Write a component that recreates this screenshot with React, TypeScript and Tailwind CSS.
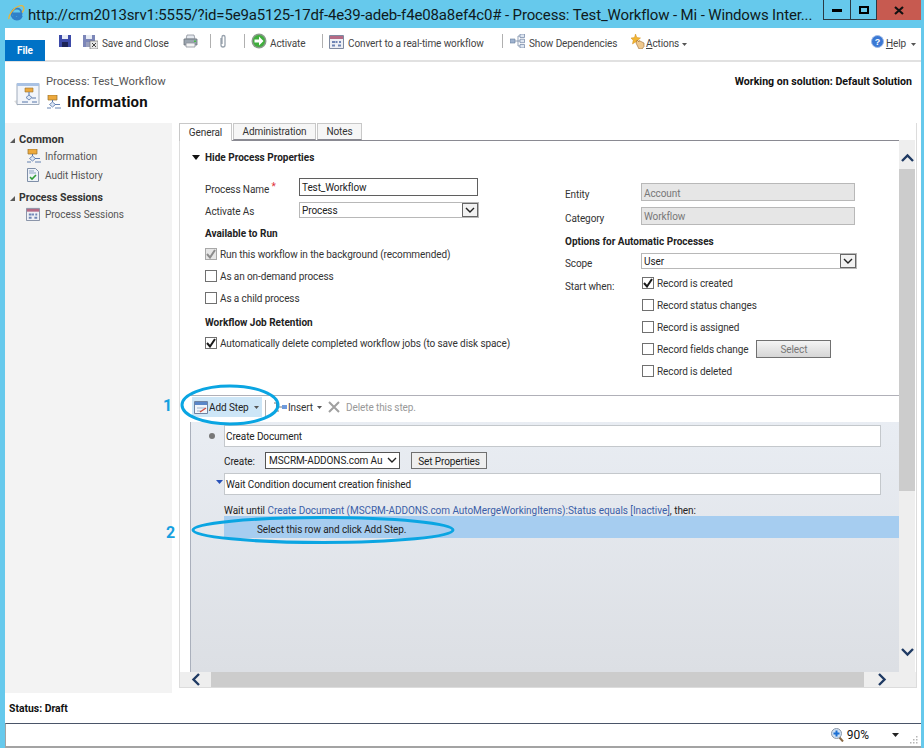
import React from "react";

const Sep = ({ ml }: { ml: string }) => <div className={`w-px h-[14px] bg-[#b0b0b0] ${ml}`} />;

const Caret = ({ color = "#555" }: { color?: string }) => (
  <svg width="5" height="3" viewBox="0 0 5 3" className="shrink-0"><path d="M0 0h5L2.500 3z" fill={color} /></svg>
);

const IeLogo = () => (
  <svg width="17" height="18" viewBox="0 0 17 18" className="shrink-0">
    <path d="M4 9.500h9.500c0-3-2-5-4.600-5C6 4.500 3.500 7 3.500 10s2.300 5.500 5.300 5.500c2.200 0 3.700-1 4.500-2.700h-3c-.4.600-1 .9-1.700.9-1.400 0-2.500-1-2.600-2.400H14" fill="none" stroke="#2f7fc8" strokeWidth="2" />
    <path d="M1 15C0 11 6 3.500 11 2c3-1 5 0 5 2.500-.3 2-1.500 3.500-2 4" fill="none" stroke="#e9b53b" strokeWidth="1.300" />
  </svg>
);

const Floppy = ({ x }: { x?: boolean }) => (
  <svg width="15" height="15" viewBox="0 0 15 15" className="shrink-0">
    <path d="M0 1h12v12H0z" fill={x ? "#7c86b8" : "#3c4aa8"} />
    <path d="M3 1h6v4H3z" fill="#e8ecf5" />
    <path d="M3 8h6v5H3z" fill={x ? "#9aa0bd" : "#1d2456"} />
    {x && <path d="M7 7h8v8H7z" fill="#e6e6e6" stroke="#777" strokeWidth="0.700" />}
    {x && <path d="M9 9l4 4m0-4l-4 4" stroke="#444" strokeWidth="1" />}
  </svg>
);

const Printer = () => (
  <svg width="15" height="14" viewBox="0 0 15 14" className="shrink-0">
    <path d="M4 1h7l1 4H3z" fill="#e4e8ee" stroke="#8a9099" strokeWidth="0.800" />
    <path d="M1 5h13v6H1z" fill="#9aa4ae" stroke="#6c747c" strokeWidth="0.800" />
    <path d="M3 9h9v4H3z" fill="#f4f4f4" stroke="#8a9099" strokeWidth="0.800" />
    <rect x="11" y="6.500" width="2" height="1.500" fill="#49c04a" />
  </svg>
);

const Clip = () => (
  <svg width="8" height="14" viewBox="0 0 8 14" className="shrink-0">
    <path d="M2 4v7a2 2 0 0 0 4 0V3a1.400 1.400 0 0 0-3 0v7" fill="none" stroke="#98a2ad" strokeWidth="1.300" />
  </svg>
);

const Activate = () => (
  <svg width="16" height="16" viewBox="0 0 16 16" className="shrink-0">
    <circle cx="8" cy="8" r="7.500" fill="#8a9a8a" />
    <circle cx="8" cy="8" r="6" fill="#3fae3c" />
    <path d="M3.500 6.500H8V3.500L12.500 8 8 12.500v-3H3.500z" fill="#fff" />
  </svg>
);

const Calendar = ({ size = 15 }: { size?: number }) => (
  <svg width={size} height={size} viewBox="0 0 15 15" className="shrink-0">
    <path d="M.5 1.500h14v13H.5z" fill="#eef0f5" stroke="#7f8aa0" />
    <path d="M1 2h13v3H1z" fill="#b56a85" />
    <path d="M3 7h3v2H3zm3.500 0h2v2h-2zM10 7h2v2h-2zM3 10.500h3v2H3zm6 0h3v2H9z" fill="#6f85b5" />
  </svg>
);

const AddStepIcon = () => (
  <svg width="14" height="15" viewBox="0 0 14 15" className="shrink-0">
    <path d="M.5 1.500h13v12H.5z" fill="#f2f5fa" stroke="#6f83a3" />
    <path d="M1 2h12v3H1z" fill="#5a86c8" />
    <path d="M3 8h8M3 11h4" stroke="#9fb3cf" />
    <path d="M6 12l6-4" stroke="#d0493b" strokeWidth="1.400" />
  </svg>
);

const Deps = () => (
  <svg width="15" height="14" viewBox="0 0 15 14" className="shrink-0">
    <path d="M0 5h5v4H0z" fill="#9fb3cf" stroke="#667c9c" strokeWidth="0.600" />
    <path d="M5 7h3M8 2v10M8 2h2M8 7h2M8 12h2" stroke="#7a8ba5" strokeWidth="0.800" fill="none" />
    <path d="M10 0h4.500v3.500H10zM10 5.200h4.500v3.500H10zM10 10.500h4.500V14H10z" fill="#dde5f0" stroke="#6f83a3" strokeWidth="0.700" />
  </svg>
);

const Actions = () => (
  <svg width="15" height="15" viewBox="0 0 15 15" className="shrink-0">
    <path d="M4.500 0l1.300 3.500L9.500 4 6.800 6.300 7.500 10 4.500 8 1.500 10l.7-3.700L0 4l3.500-.4z" fill="#f2b632" stroke="#d28c1a" strokeWidth="0.500" />
    <path d="M6 6l2 2V6.500l5 2.500v3.500L11 15H8L5 9z" fill="#f0c98e" stroke="#9a6a30" strokeWidth="0.600" />
  </svg>
);

const Help = () => (
  <svg width="13" height="13" viewBox="0 0 13 13" className="shrink-0">
    <circle cx="6.500" cy="6.500" r="6" fill="#3a78d4" stroke="#9cb8e6" />
    <text x="6.500" y="10" fontSize="9" fontWeight="700" textAnchor="middle" fill="#fff" fontFamily="Liberation Sans, sans-serif">?</text>
  </svg>
);

const Flow = ({ size = 15 }: { size?: number }) => (
  <svg width={size} height={size} viewBox="0 0 15 15" className="shrink-0">
    <path d="M2 0h9v5H2z" fill="#eda93c" stroke="#96702f" strokeWidth="0.700" />
    <path d="M6.500 5v2" stroke="#5474a8" />
    <path d="M6.500 7l3 2.500-3 2.500-3-2.500z" fill="#dbe6f5" stroke="#5474a8" strokeWidth="0.800" />
    <path d="M1 13h4m4-3.500h5M9 13h6" stroke="#5474a8" strokeWidth="0.900" />
  </svg>
);

const BigFlow = () => (
  <svg width="27" height="26" viewBox="0 0 27 26" className="shrink-0">
    <path d="M0 19l4-1v6z" fill="#ddd" />
    <path d="M3 1.500h22v21H3z" fill="#f2f5fa" stroke="#a0acbc" />
    <path d="M3 1h22v3H3z" fill="#a9c2e4" />
    <path d="M11 6h8v4h-8z" fill="#eda93c" stroke="#96702f" strokeWidth="0.600" />
    <path d="M15 10v3" stroke="#5474a8" />
    <path d="M15 13l3 2.500-3 2.500-3-2.500z" fill="#dbe6f5" stroke="#5474a8" strokeWidth="0.800" />
    <path d="M8 20h6m4-4h4m-4 4h5" stroke="#5474a8" />
  </svg>
);

const Audit = () => (
  <svg width="12" height="14" viewBox="0 0 12 14" className="shrink-0">
    <path d="M.5.500h8l3 3v10H.5z" fill="#eef2f8" stroke="#7f8fa8" />
    <path d="M2 3h5M2 5h7" stroke="#8fa3c4" />
    <path d="M3 9l2 2 4-4" fill="none" stroke="#2f9e37" strokeWidth="1.600" />
  </svg>
);

const Tri = () => (
  <svg width="5" height="5" viewBox="0 0 5 5" className="shrink-0"><path d="M5 0v5H0z" fill="#595959" /></svg>
);

const Box = ({ checked, grey }: { checked?: boolean; grey?: boolean }) => (
  <span className={`w-[12px] h-[12px] shrink-0 border flex items-center justify-center ${grey ? "border-[#a8a8a8] bg-[#e6e6e6]" : "border-[#707070] bg-white"}`}>
    {checked && (
      <svg width="10" height="10" viewBox="0 0 10 10">
        <path d="M1 5l3 3.500L9 1" fill="none" stroke={grey ? "#8c8c8c" : "#1a1a1a"} strokeWidth="2" />
      </svg>
    )}
  </span>
);

const CheckRow = ({ label, checked, grey, children }: { label: string; checked?: boolean; grey?: boolean; children?: React.ReactNode }) => (
  <div className="h-[22px] flex items-center gap-[3px] whitespace-nowrap">
    <Box checked={checked} grey={grey} />
    <span>{label}</span>
    {children}
  </div>
);

const DropBtn = () => (
  <span className="w-[16px] h-full bg-[#f2f2f2] flex items-center justify-center shrink-0 border border-[#666]">
    <svg width="10" height="6" viewBox="0 0 10 6"><path d="M1 1l4 4 4-4" fill="none" stroke="#222" strokeWidth="1.400" /></svg>
  </span>
);

const Chevron = ({ d }: { d: "up" | "down" | "left" | "right" }) => {
  const paths = {
    up: "M1 8l5.500-5.500L12 8",
    down: "M1 2l5.500 5.500L12 2",
    left: "M8 1L2.500 6.500 8 12",
    right: "M2 1l5.500 5.500L2 12",
  };
  const vertical = d === "up" || d === "down";
  return (
    <svg width={vertical ? 13 : 10} height={vertical ? 10 : 13} viewBox={vertical ? "0 0 13 10" : "0 0 10 13"}>
      <path d={paths[d]} fill="none" stroke="#1f3a63" strokeWidth="2.400" />
    </svg>
  );
};

export default function App() {
  return (
    <div className="w-[924px] h-[748px] overflow-hidden bg-[#66c9ec] flex flex-col text-[10px] tracking-[-0.1px] text-[#333] font-['Roboto',sans-serif]">
      {/* Title bar */}
      <div className="h-[28px] flex items-start shrink-0">
        <div className="pl-[8px] pt-[4px] pr-[3px]"><IeLogo /></div>
        <div className="text-[15px] tracking-[-0.14px] text-[#0f1a20] leading-[30px] whitespace-nowrap w-[795px] shrink-0">
          http://crm2013srv1:5555/?id=5e9a5125-17df-4e39-adeb-f4e08a8ef4c0# - Process: Test_Workflow - Mi - Windows Inter...
        </div>
        <div className="flex h-[20px] w-[98px] shrink-0">
          <div className="w-[28px] border border-t-0 border-[#2a3a44] flex items-center justify-center"><div className="w-[10px] h-[3px] bg-black mt-[2px]" /></div>
          <div className="w-[26px] border-b border-r border-[#2a3a44] flex items-center justify-center"><div className="w-[10px] h-[8px] border-2 border-black" /></div>
          <div className="flex-1 bg-[#c75a50] flex items-center justify-center">
            <svg width="10" height="9" viewBox="0 0 10 9"><path d="M1 1l8 7M9 1L1 8" stroke="#111" strokeWidth="2.200" /></svg>
          </div>
        </div>
      </div>

      {/* White window */}
      <div className="ml-[5px] mr-[3px] flex-1 bg-white flex flex-col min-h-0">
        {/* Ribbon */}
        <div className="h-[34px] shrink-0 border-b-2 border-[#e1e1e1] flex text-[#444] whitespace-nowrap">
          <div className="w-[40px] h-[21px] self-end bg-[#0072c6] text-white font-bold text-[10px] flex items-center justify-center mb-[-1px]">File</div>
          <div className="flex-1 flex items-start pt-[6px] h-[26px]">
            <div className="ml-[14px] flex items-center h-[14px]"><Floppy /></div>
            <div className="ml-[9px] flex items-center h-[14px]"><Floppy x /></div>
            <span className="ml-[4px] leading-[20px] w-[66px]">Save and Close</span>
            <div className="ml-[15px] flex items-center h-[14px]"><Printer /></div>
            <Sep ml="ml-[12px]" />
            <div className="ml-[8px] flex items-center h-[14px]"><Clip /></div>
            <Sep ml="ml-[17px]" />
            <div className="ml-[6px] h-[14px] flex items-center"><Activate /></div>
            <span className="ml-[3px] leading-[20px] w-[40px]">Activate</span>
            <Sep ml="ml-[12px]" />
            <div className="ml-[6px] h-[14px] flex items-center"><Calendar /></div>
            <span className="ml-[4px] leading-[20px] w-[139px]">Convert to a real-time workflow</span>
            <Sep ml="ml-[15px]" />
            <div className="ml-[7px] h-[14px] flex items-center"><Deps /></div>
            <span className="ml-[4px] leading-[20px] w-[89px]">Show Dependencies</span>
            <div className="ml-[13px] h-[14px] flex items-center"><Actions /></div>
            <span className="leading-[20px] w-[33px]"><u>A</u>ctions</span>
            <span className="ml-[3px] h-[20px] flex items-center"><Caret /></span>
            <div className="ml-auto h-[14px] flex items-center"><Help /></div>
            <span className="ml-[2px] leading-[20px]"><u>H</u>elp</span>
            <span className="ml-[5px] mr-[5px] h-[20px] flex items-center"><Caret /></span>
          </div>
        </div>

        {/* Page header */}
        <div className="h-[61px] shrink-0 flex relative pt-[12px] pl-[9px]">
          <div className="mt-[8px]"><BigFlow /></div>
          <div className="ml-[5px] flex flex-col">
            <span className="text-[11.25px] text-[#555] leading-[16px] whitespace-nowrap tracking-[0]">Process: Test_Workflow</span>
            <div className="flex items-center mt-[3px]">
              <Flow />
              <span className="ml-[6px] text-[15px] font-bold text-[#111] leading-[18px] tracking-[0.15px]">Information</span>
            </div>
          </div>
          <div className="ml-auto mr-[9px] font-bold text-[10.6px] text-[#111] whitespace-nowrap leading-[16px] tracking-[0]">Working on solution: Default Solution</div>
        </div>

        {/* Body */}
        <div className="h-[570px] shrink-0 flex">
          {/* Nav */}
          <div className="w-[167px] shrink-0 bg-[#f3f3f3] text-[#555] text-[10px] tracking-[0] pt-[9px]">
            <div className="h-[16px] flex items-center pl-[5px] font-bold text-[#333] text-[11px]"><Tri /><span className="ml-[4px]">Common</span></div>
            <div className="h-[18px] -mt-[1px] flex items-center pl-[21px]"><Flow /><span className="ml-[4px]">Information</span></div>
            <div className="h-[18px] mt-[1px] flex items-center pl-[22px]"><Audit /><span className="ml-[6px]">Audit History</span></div>
            <div className="h-[16px] mt-[6px] flex items-center pl-[5px] font-bold text-[#333] text-[10.5px]"><Tri /><span className="ml-[4px]">Process Sessions</span></div>
            <div className="h-[18px] -mt-[1px] flex items-center pl-[21px]"><Calendar size={14} /><span className="ml-[5px]">Process Sessions</span></div>
          </div>

          {/* Main */}
          <div className="ml-[7px] w-[738px] h-[565px] flex flex-col shrink-0 border-r border-b border-[#dcdcdc]">
            {/* Tabs */}
            <div className="h-[18px] shrink-0 flex text-[#333] -mb-px relative z-10">
              <div className="w-[53px] h-[18px] border border-b-0 border-[#c8c8c8] bg-white flex items-center justify-center">General</div>
              <div className="ml-px w-[83px] h-[17px] border border-[#c8c8c8] border-b-[#8a8a92] bg-[#f6f6f6] flex items-center justify-center">Administration</div>
              <div className="ml-px w-[45px] h-[17px] border border-[#c8c8c8] border-b-[#8a8a92] bg-[#f6f6f6] flex items-center justify-center">Notes</div>
              <div className="flex-1" />
            </div>

            <div className="flex-1 flex flex-col border-l border-[#dcdcdc] min-h-0">
              <div className="flex-1 flex min-h-0">
                {/* Scrollable content */}
                <div className="w-[719px] flex flex-col border-t border-[#8a8a92]">
                  {/* Form */}
                  <div className="h-[254px] shrink-0 flex flex-col">
                    <div className="h-[32px] flex items-center pl-[12px] shrink-0">
                      <svg width="8" height="5" viewBox="0 0 8 5"><path d="M0 0h8L4 5z" fill="#111" /></svg>
                      <span className="ml-[5px] font-bold text-[10px] tracking-[0] text-[#222]">Hide Process Properties</span>
                    </div>
                    <div className="flex">
                      {/* Left column */}
                      <div className="w-[385px] pl-[25px] pt-[5px]">
                        <div className="flex h-[24px] items-start">
                          <div className="w-[94px] pt-[3px] leading-[18px]">Process Name <span className="text-[#e0313a] relative top-[-3px]">*</span></div>
                          <div className="w-[179px] h-[18px] border border-[#5f5f5f] px-[2px] leading-[18px] text-[#222]">Test_Workflow</div>
                        </div>
                        <div className="flex h-[24px] items-start">
                          <div className="w-[94px] pt-[1px] leading-[18px]">Activate As</div>
                          <div className="w-[180px] h-[16px] border border-[#b8b8b8] flex items-center justify-between pl-[2px] text-[#222]">Process<DropBtn /></div>
                        </div>
                        <div className="font-bold text-[10px] text-[#222] h-[16px] leading-[16px] tracking-[0]">Available to Run</div>
                        <div className="mt-[1px]">
                          <CheckRow label="Run this workflow in the background (recommended)" checked grey />
                          <CheckRow label="As an on-demand process" />
                          <CheckRow label="As a child process" />
                        </div>
                        <div className="font-bold text-[10px] text-[#222] h-[16px] leading-[16px] mt-[6px] tracking-[0]">Workflow Job Retention</div>
                        <div className="mt-[1px]">
                          <CheckRow label="Automatically delete completed workflow jobs (to save disk space)" checked />
                        </div>
                      </div>
                      {/* Right column */}
                      <div className="flex-1 pt-[10px]">
                        <div className="flex h-[24px] items-start">
                          <div className="w-[76px] pt-[3px] leading-[18px]">Entity</div>
                          <div className="w-[214px] h-[18px] border border-[#b8b8b8] bg-[#e6e6e6] px-[2px] leading-[19px] text-[#777]">Account</div>
                        </div>
                        <div className="flex h-[24px] items-start">
                          <div className="w-[76px] pt-[3px] leading-[18px]">Category</div>
                          <div className="w-[214px] h-[18px] border border-[#b8b8b8] bg-[#e6e6e6] px-[2px] leading-[18px] text-[#777]">Workflow</div>
                        </div>
                        <div className="font-bold text-[10px] tracking-[0] text-[#222] h-[16px] leading-[16px] mt-[3px]">Options for Automatic Processes</div>
                        <div className="flex h-[22px] items-start mt-[3px]">
                          <div className="w-[76px] pt-[2px] leading-[18px]">Scope</div>
                          <div className="w-[216px] h-[16px] border border-[#b8b8b8] flex items-center justify-between pl-[2px] text-[#222]">User<DropBtn /></div>
                        </div>
                        <div className="flex">
                          <div className="w-[77px] pt-[3px] leading-[18px]">Start when:</div>
                          <div className="-mt-[3px]">
                            <CheckRow label="Record is created" checked />
                            <CheckRow label="Record status changes" />
                            <CheckRow label="Record is assigned" />
                            <CheckRow label="Record fields change">
                              <div className="ml-[5px] w-[75px] h-[18px] border border-[#707070] bg-gradient-to-b from-[#f4f4f4] to-[#d6d6d6] text-[#777] flex items-center justify-center">Select</div>
                            </CheckRow>
                            <CheckRow label="Record is deleted" />
                          </div>
                        </div>
                      </div>
                    </div>
                  </div>

                  {/* Step toolbar */}
                  <div className="ml-[10px] h-[27px] shrink-0 border-t border-[#b0b0b8] flex items-start pt-[1px] whitespace-nowrap">
                    <div className="ml-[2px] w-[70px] h-[20px] bg-[#cde6f7] flex items-center pl-[2px] text-[#222]">
                      <AddStepIcon />
                      <span className="ml-[1px] pt-[1px]">Add Step</span>
                      <span className="ml-[5px]"><Caret /></span>
                    </div>
                    <div className="ml-[3px] mt-[3px] w-px h-[16px] bg-[#b0b0b0]" />
                    <div className="ml-[7px] h-[20px] flex items-center text-[#333]">
                      <svg width="15" height="10" viewBox="0 0 15 10" className="shrink-0"><path d="M1 1h5M3.500 1v8M1 9h5M3.500 5H9" stroke="#777" fill="none" /><path d="M9 3h5v4H9z" fill="#6f9bdc" /></svg>
                      <span className="pt-[1px]">Insert</span>
                      <span className="ml-[4px]"><Caret /></span>
                    </div>
                    <div className="ml-[6px] h-[20px] flex items-center text-[#999]">
                      <svg width="12" height="12" viewBox="0 0 12 12" className="shrink-0"><path d="M1 1l10 10M11 1L1 11" stroke="#a0a0a0" strokeWidth="2" /></svg>
                      <span className="ml-[6px] pt-[1px]">Delete this step.</span>
                    </div>
                  </div>

                  {/* Steps */}
                  <div className="ml-[10px] flex-1 border-l border-[#aab0bc] bg-gradient-to-b from-[#e9edf3] to-[#dcdfe4] pt-[3px] text-[#222] whitespace-nowrap">
                    <div className="h-[22px] flex items-center relative">
                      <div className="absolute left-[18px] top-[8px] w-[6px] h-[6px] rounded-full bg-[#777]" />
                      <div className="ml-[33px] w-[657px] h-[22px] border border-[#c4c8cc] bg-white pl-[1px] leading-[22px]">Create Document</div>
                    </div>
                    <div className="h-[26px] flex items-center pl-[33px]">
                      <span className="w-[41px] pt-[2px]">Create:</span>
                      <div className="w-[135px] h-[17px] border border-[#555] bg-white flex items-center pl-[3px] pt-[1px] relative">
                        <span>MSCRM-ADDONS.com Au</span>
                        <svg width="10" height="6" viewBox="0 0 10 6" className="absolute right-[2px] top-[4px]"><path d="M1 1l4 4 4-4" fill="none" stroke="#222" strokeWidth="1.400" /></svg>
                      </div>
                      <div className="ml-[11px] w-[76px] h-[17px] mt-[1px] border border-[#707070] bg-[#eeeeee] flex items-center justify-center pt-[1px]">Set Properties</div>
                    </div>
                    <div className="h-[22px] flex items-center relative">
                      <svg width="7" height="4" viewBox="0 0 7 4" className="absolute left-[25px] top-[7px]"><path d="M0 0h7L3.500 4z" fill="#2a52b8" /></svg>
                      <div className="ml-[33px] w-[657px] h-[22px] border border-[#c4c8cc] bg-white pl-[1px] leading-[22px]">Wait Condition document creation finished</div>
                    </div>
                    <div className="h-[21px] flex items-end pl-[33px] leading-[11px] tracking-[-0.05px]">
                      <span>Wait until&nbsp;</span>
                      <span className="text-[#3b5fa8]">Create Document (MSCRM-ADDONS.com AutoMergeWorkingItems):Status equals [Inactive]</span>
                      <span>, then:</span>
                    </div>
                    <div className="ml-[33px] h-[22px] bg-[#a6cdf0] pl-[33px] leading-[28px]">Select this row and click Add Step.</div>
                  </div>
                </div>

                {/* Vertical scrollbar */}
                <div className="w-[16px] flex flex-col shrink-0 bg-[#eeeeee]">
                  <div className="h-[29px] flex items-center justify-center pt-[6px]"><Chevron d="up" /></div>
                  <div className="h-[322px] bg-[#cccccc]" />
                  <div className="flex-1 flex items-end justify-center pb-[15px]"><Chevron d="down" /></div>
                </div>
              </div>

              {/* Horizontal scrollbar */}
              <div className="h-[15px] shrink-0 flex bg-[#eeeeee]">
                <div className="w-[31px] flex items-center justify-center"><Chevron d="left" /></div>
                <div className="w-[653px] bg-[#cccccc]" />
                <div className="w-[35px] flex items-center justify-center"><Chevron d="right" /></div>
              </div>
            </div>
          </div>
        </div>

        {/* Status */}
        <div className="h-[30px] shrink-0 flex items-center pl-[4px] pt-[1px] font-bold text-[10.4px] tracking-[0] text-[#111]">Status: Draft</div>

        {/* IE status bar */}
        <div className="h-[25px] shrink-0 border-t border-t-[#4a5568] border-b-2 border-b-[#a3a3a3] border-l border-l-[#a3a3a3] flex items-center justify-end relative">
          <svg width="13" height="14" viewBox="0 0 13 14" className="shrink-0"><path d="M8 9l4 4.500" stroke="#8a6a45" strokeWidth="2" /><circle cx="5.500" cy="5.500" r="5" fill="#cfe0f2" stroke="#8a97a8" /><path d="M2.500 5.500h6M5.500 2.500v6" stroke="#1a6fd4" strokeWidth="2" /></svg>
          <span className="ml-[3px] text-[12px] tracking-[0] text-[#111]">90%</span>
          <svg width="7" height="4" viewBox="0 0 7 4" className="ml-[23px] mr-[22px]"><path d="M0 0h7L3.500 4z" fill="#222" /></svg>
          <svg width="10" height="10" viewBox="0 0 10 10" className="absolute right-[2px] bottom-[1px]"><path d="M7 1h1.500v1.500H7zM4 4h1.500v1.500H4zm3 0h1.500v1.500H7zM1 7h1.500v1.500H1zm3 0h1.500v1.500H4zm3 0h1.500v1.500H7z" fill="#b5b5b5" /></svg>
        </div>
      </div>

      {/* Annotations */}
      <svg width="924" height="748" viewBox="0 0 924 748" className="absolute left-0 top-0 pointer-events-none">
        <ellipse cx="230" cy="405" rx="48" ry="19" fill="none" stroke="#0aa5e2" strokeWidth="3" />
        <ellipse cx="323" cy="530" rx="130" ry="12.500" fill="none" stroke="#0aa5e2" strokeWidth="3" />
      </svg>
      <span className="absolute left-[163px] top-[396px] text-[16px] font-bold text-[#16a0e0] leading-[20px]">1</span>
      <span className="absolute left-[166px] top-[523px] text-[16px] font-bold text-[#16a0e0] leading-[20px]">2</span>
    </div>
  );
}
